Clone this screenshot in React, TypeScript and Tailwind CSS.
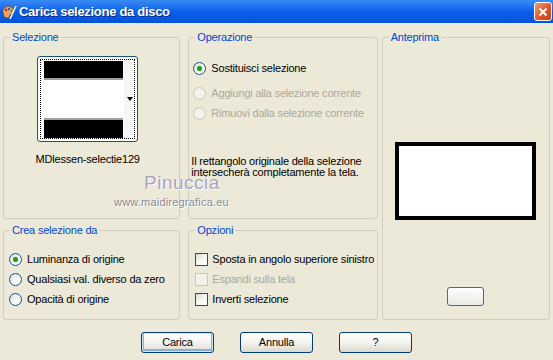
import type { ReactNode } from 'react'

const font = { fontFamily: '"Liberation Sans", Arial, sans-serif' }

function Radio({ checked, disabled, label }: { checked?: boolean; disabled?: boolean; label: string }) {
  return (
    <div className="flex items-center h-[20px] whitespace-nowrap">
      <span
        className={`w-[13px] h-[13px] rounded-full border flex items-center justify-center ${
          disabled ? 'border-[#cac8bb] bg-[#f2f1ea]' : 'border-[#1c5180] bg-gradient-to-br from-[#dcdcd6] via-[#f6f6f4] to-white'
        }`}
      >
        {checked && <span className="w-[5px] h-[5px] rounded-full bg-[#21a121] shadow-[0_0_1px_#6bd36b]" />}
      </span>
      <span className={`ml-[5px] ${disabled ? 'text-[#aca899]' : 'text-black'}`}>{label}</span>
    </div>
  )
}

function Check({ disabled, label }: { disabled?: boolean; label: string }) {
  return (
    <div className="flex items-center h-[20px] whitespace-nowrap">
      <span
        className={`w-[13px] h-[13px] border ${
          disabled ? 'border-[#cac8bb] bg-[#f2f1ea]' : 'border-[#1c5180] bg-gradient-to-br from-[#dcdcd6] via-[#f6f6f4] to-white'
        }`}
      />
      <span className={`ml-[4px] ${disabled ? 'text-[#aca899]' : 'text-black'}`}>{label}</span>
    </div>
  )
}

function Group({ title, className, children }: { title: string; className: string; children: ReactNode }) {
  return (
    <fieldset className={`border border-[#d0d0bf] rounded-[3px] ${className}`}>
      <legend className="ml-[6px] px-[2px] text-[#0046d5] leading-[13px]">{title}</legend>
      {children}
    </fieldset>
  )
}

function Button({ label, isDefault }: { label: string; isDefault?: boolean }) {
  return (
    <button
      className={`w-[73px] h-[21px] rounded-[3px] border border-[#003c74] bg-gradient-to-b from-white via-[#f3f3ef] to-[#dcd8cc] text-black leading-none ${
        isDefault ? 'shadow-[inset_0_0_0_1px_#cee7ff,inset_0_-1px_0_2px_#89ade4]' : ''
      }`}
    >
      {label}
    </button>
  )
}

export default function App() {
  return (
    <div className="w-[553px] h-[360px] bg-[#ece9d8] text-[11px] tracking-[-0.2px] overflow-hidden" style={font}>
      {/* title bar */}
      <div className="h-[23px] flex items-center bg-gradient-to-b from-[#3a8cf6] via-[#0a5fea] to-[#0853d8]">
        <svg width="16" height="16" viewBox="0 0 16 16" className="ml-[1px]">
          <path d="M2 9 C1 4 6 1 10 3 C14 5 13 9 10 10 C8 11 9 14 6 14 C3 14 3 11 2 9Z" fill="#e8a25c" stroke="#7a4a20" strokeWidth="0.8" />
          <circle cx="5" cy="6" r="1.2" fill="#d42020" />
          <circle cx="8" cy="5" r="1.2" fill="#2060d0" />
          <circle cx="10.5" cy="7" r="1.1" fill="#20a020" />
          <path d="M9 15 L15 2" stroke="#fff" strokeWidth="1.4" />
        </svg>
        <span className="ml-[2px] text-white font-bold text-[13px] tracking-[-0.3px] [text-shadow:1px_1px_0_#0a2a8a]">
          Carica selezione da disco
        </span>
        <div className="ml-auto mr-[1px] w-[18px] h-[19px] rounded-[3px] border border-white bg-gradient-to-br from-[#f39a7a] via-[#e35a2c] to-[#c2401a] flex items-center justify-center">
          <svg width="10" height="10" viewBox="0 0 10 10">
            <path d="M1.5 1.5 L8.5 8.5 M8.5 1.5 L1.5 8.5" stroke="#fff" strokeWidth="2" />
          </svg>
        </div>
      </div>

      {/* body */}
      <div className="relative px-[3px] pt-[8px]">
        <div className="flex">
          <div className="flex flex-col gap-[5px] w-[178px]">
            <Group title="Selezione" className="h-[188px]">
              <div className="flex flex-col items-center pr-[8px]">
                <div className="mt-[12px] w-[101px] h-[86px] rounded-[3px] border border-[#1c5180] bg-white p-[2px]">
                  <div className="h-full border border-dotted border-black relative flex">
                    <div className="w-[79px] flex flex-col justify-between pt-[1px] ml-[3px]">
                      <div className="h-[19px] bg-black border-b-2 border-[#a0a0a0]" />
                      <div className="h-[20px] bg-black border-t-2 border-[#a0a0a0]" />
                    </div>
                    <div className="flex-1 ml-[1px] bg-[#f6f6f6] flex items-center justify-end pr-[1px]">
                      <span className="w-0 h-0 border-l-[3px] border-r-[3px] border-t-[4px] border-l-transparent border-r-transparent border-t-black" />
                    </div>
                  </div>
                </div>
                <div className="mt-[9px] text-black">MDlessen-selectie129</div>
              </div>
            </Group>
            <Group title="Crea selezione da" className="h-[96px]">
              <div className="pl-[5px] pt-[12px]">
                <Radio checked label="Luminanza di origine" />
                <Radio label="Qualsiasi val. diverso da zero" />
                <Radio label="Opacità di origine" />
              </div>
            </Group>
          </div>

          <div className="flex flex-col gap-[5px] w-[190px] ml-[8px]">
            <Group title="Operazione" className="h-[188px]">
              <div className="pl-[4px] pt-[14px]">
                <Radio checked label="Sostituisci selezione" />
                <div className="mt-[5px]">
                  <Radio disabled label="Aggiungi alla selezione corrente" />
                </div>
                <Radio disabled label="Rimuovi dalla selezione corrente" />
                <p className="mt-[33px] -ml-[2px] leading-[11px] text-black">
                  Il rettangolo originale della selezione
                  <br />
                  intersecherà completamente la tela.
                </p>
              </div>
            </Group>
            <Group title="Opzioni" className="h-[96px]">
              <div className="pl-[6px] pt-[12px]">
                <Check label="Sposta in angolo superiore sinistro" />
                <Check disabled label="Espandi sulla tela" />
                <Check label="Inverti selezione" />
              </div>
            </Group>
          </div>

          <Group title="Anteprima" className="h-[289px] w-[169px] ml-[4px]">
            <div className="flex flex-col items-center">
              <div className="mt-[98px] w-[141px] h-[78px] border-[4px] border-black bg-white" />
              <div className="mt-[67px] w-[37px] h-[19px] rounded-[3px] border border-[#4b6a8a] bg-gradient-to-b from-white to-[#e8e8e4] flex items-center justify-center">
                <span className="w-[14px] h-[6px] bg-[#f2f2f2]" />
              </div>
            </div>
          </Group>
        </div>

        <div className="flex pl-[138px] gap-[26px] mt-[12px]">
          <Button isDefault label="Carica" />
          <Button label="Annulla" />
          <Button label="?" />
        </div>

        {/* watermark */}
        <div className="absolute left-[114px] top-[153px] w-[122px] flex flex-col pointer-events-none">
          <span className="ml-[30px] text-[19px] leading-[14px] text-[#a6a6c6] tracking-[0.5px] [text-shadow:1px_1px_0_#ffffff]">
            Pinuccia
          </span>
          <span className="mt-[7px] text-[11px] leading-[11px] text-[#8a8a9a] tracking-[0.2px] [text-shadow:1px_1px_0_#ffffff]">
            www.maidiregrafica.eu
          </span>
        </div>
      </div>
    </div>
  )
}
